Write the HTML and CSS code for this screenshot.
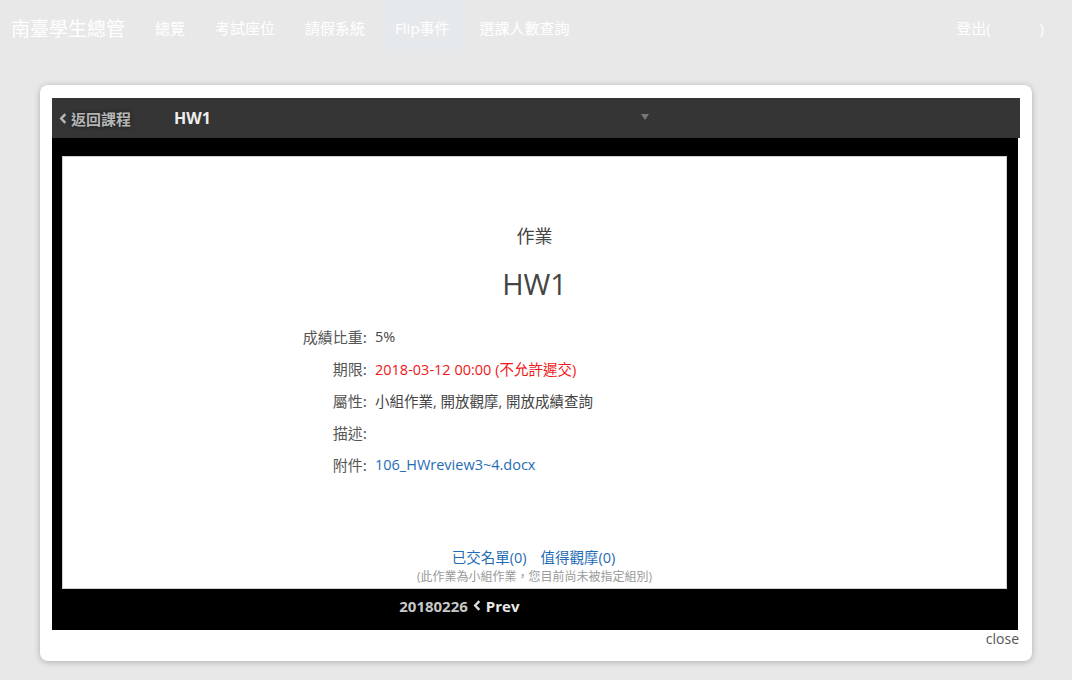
FILE: index.html
```html
<!DOCTYPE html>
<html lang="zh-Hant">
<head>
<meta charset="utf-8">
<title>南臺學生總管</title>
<link rel="stylesheet" href="styles.css">
</head>
<body>
<nav class="navbar">
  <a class="brand">南臺學生總管</a>
  <ul class="nav">
    <li class="nav-item">總覽</li>
    <li class="nav-item">考試座位</li>
    <li class="nav-item">請假系統</li>
    <li class="nav-item active">Flip事件</li>
    <li class="nav-item">選課人數查詢</li>
  </ul>
  <div class="nav-right">登出(<span class="user"></span>)</div>
</nav>

<div class="modal">
  <div class="modal-head">
    <a class="back">
      <svg class="chev" viewBox="0 0 8 12" width="8" height="11"><path d="M6.5 1.2 L2 6 L6.5 10.8" fill="none" stroke="currentColor" stroke-width="2.6"/></svg>
      返回課程
    </a>
    <span class="head-title">HW1</span>
    <span class="caret"></span>
  </div>
  <div class="frame">
    <div class="panel">
      <div class="kind">作業</div>
      <h1 class="title">HW1</h1>
      <div class="info">
        <div class="label">成績比重:</div><div class="value">5%</div>
        <div class="label">期限:</div><div class="value red">2018-03-12 00:00 (不允許遲交)</div>
        <div class="label">屬性:</div><div class="value">小組作業, 開放觀摩, 開放成績查詢</div>
        <div class="label">描述:</div><div class="value"></div>
        <div class="label">附件:</div><div class="value"><a class="link">106_HWreview3~4.docx</a></div>
      </div>
      <div class="foot">
        <div class="links"><a class="link">已交名單(0)</a><a class="link">值得觀摩(0)</a></div>
        <div class="note">(此作業為小組作業，您目前尚未被指定組別)</div>
      </div>
    </div>
    <div class="pager">
      <div class="pager-prev">20180226 <svg class="chev2" viewBox="0 0 8 12" width="8" height="11"><path d="M6.5 1.2 L2 6 L6.5 10.8" fill="none" stroke="currentColor" stroke-width="2.6"/></svg> <span class="prev">Prev</span></div>
      <div class="pager-next"></div>
    </div>
  </div>
  <div class="close-row"><a class="close">close</a></div>
</div>
</body>
</html>
```

FILE: styles.css
```css
* { box-sizing: border-box; }
html, body { margin: 0; padding: 0; }
body {
  background: #e8e8e8;
  font-family: "Open Sans", "Noto Sans CJK TC", sans-serif;
  width: 1072px;
  height: 680px;
  overflow: hidden;
}
a { text-decoration: none; cursor: pointer; }

.navbar {
  display: flex;
  align-items: stretch;
  height: 55px;
}
.brand {
  display: flex;
  align-items: center;
  padding: 0 15px 0 11px;
  font-size: 19px;
  color: #fff;
  font-family: "Noto Sans CJK TC", sans-serif;
}
.nav {
  display: flex;
  list-style: none;
  margin: 0;
  padding: 0;
}
.nav-item {
  display: flex;
  align-items: center;
  padding: 0 15px;
  font-size: 15px;
  font-weight: 400;
  color: #fff;
  font-family: "Open Sans", "Noto Sans CJK TC", sans-serif;
}
.nav-item.active { background: #e6e9ec; }
.nav-right {
  margin-left: auto;
  margin-right: 28px;
  display: flex;
  align-items: center;
  font-size: 15px;
  color: #fff;
  font-family: "Open Sans", "Noto Sans CJK TC", sans-serif;
}
.user { display: inline-block; width: 49px; }

.modal {
  margin: 30px 0 0 40px;
  width: 992px;
  height: 576px;
  background: #fff;
  border-radius: 8px;
  box-shadow: 0 1px 6px rgba(0,0,0,0.25);
  padding: 13px 12px 0 12px;
}
.modal-head {
  display: flex;
  align-items: center;
  height: 40px;
  background: #353535;
  padding-left: 7px;
}
.back {
  display: flex;
  align-items: center;
  gap: 4px;
  font-size: 15px;
  font-weight: 700;
  color: #b4b4b4;
  text-shadow: 0 0 4px rgba(0,0,0,0.6);
  font-family: "Noto Sans CJK TC", sans-serif;
  width: 115px;
}
.chev { color: #b8b8b8; margin-top: 1px; }
.head-title {
  font-size: 16px;
  font-weight: 700;
  color: #eee;
  width: 467px;
}
.caret {
  width: 0; height: 0;
  border-left: 4px solid transparent;
  border-right: 4px solid transparent;
  border-top: 6px solid #777;
  margin-top: -2px;
}

.frame {
  width: 966px;
  height: 492px;
  background: #000;
  padding: 18px 11px 0 10px;
  display: flex;
  flex-direction: column;
}
.panel {
  height: 433px;
  background: #fff;
  border: 1px solid #cfcfcf;
  display: flex;
  flex-direction: column;
  align-items: stretch;
  padding-top: 66px;
}
.kind {
  text-align: center;
  font-size: 18px;
  line-height: 24px;
  color: #444;
  font-family: "Noto Sans CJK TC", sans-serif;
}
.title {
  margin: 19px 0 0;
  text-align: center;
  font-size: 29px;
  font-weight: 400;
  line-height: 36px;
  color: #444;
}
.info {
  margin-top: 18px;
  display: grid;
  grid-template-columns: 304px auto;
  column-gap: 8px;
  grid-auto-rows: 32px;
  align-items: center;
  font-size: 14.5px;
}
.label {
  text-align: right;
  color: #555;
  font-family: "Noto Sans CJK TC", sans-serif;
  font-size: 15px;
}
.value { color: #444; }
.value.red { color: #f01818; }
.link { color: #1f6cb4; }
.foot {
  margin-top: auto;
  padding-bottom: 3px;
  text-align: center;
}
.links {
  display: flex;
  justify-content: center;
  gap: 14px;
  font-size: 14.5px;
  line-height: 20px;
  padding-right: 2px;
}
.note {
  margin-top: 1px;
  font-size: 12px;
  line-height: 16px;
  color: #999;
}
.pager {
  flex: 1;
  display: flex;
  align-items: center;
  padding-bottom: 8px;
}
.pager-prev, .pager-next { flex: 1 1 0; }
.pager-prev {
  padding-right: 30px;
  font-size: 15px;
  font-weight: 700;
  color: #c8c8c8;
  display: flex;
  justify-content: flex-end;
  align-items: center;
  gap: 5px;
}
.chev2 { color: #ddd; }
.prev { color: #e8e8e8; }
.close-row {
  display: flex;
  justify-content: flex-end;
  padding-right: 1px;
  height: 18px;
  align-items: center;
  margin-top: -1px;
}
.close {
  font-size: 14px;
  color: #555;
}
```
